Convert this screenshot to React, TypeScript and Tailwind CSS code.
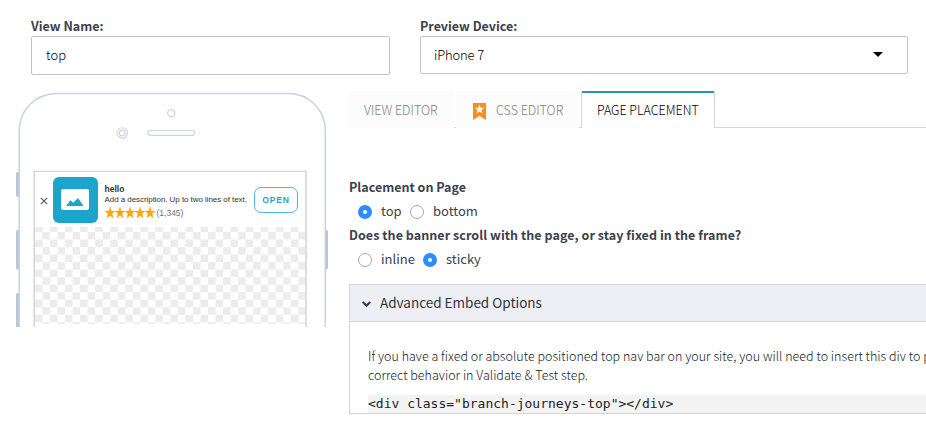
import React from "react";

const sans = "font-['Noto_Sans_CJK_SC',sans-serif]";

function Star() {
  return (
    <svg width="10" height="11" viewBox="0 0 10 10" preserveAspectRatio="none" className="block shrink-0">
      <path d="M5 0L6.3 3.6L10 3.7L7.1 6L8.1 10L5 7.7L1.9 10L2.9 6L0 3.7L3.7 3.6Z" fill="#ffa60d" stroke="#ffa60d" strokeWidth=".3" />
    </svg>
  );
}

function Radio({ checked = false }: { checked?: boolean }) {
  return checked ? (
    <span className="flex h-3.5 w-3.5 shrink-0 items-center justify-center rounded-full bg-[#2f8dfb]">
      <span className="h-1 w-1 rounded-full bg-white" />
    </span>
  ) : (
    <span className="h-3.5 w-3.5 shrink-0 rounded-full border border-[#a5a5a5] bg-white" />
  );
}

function PhoneFrame() {
  return (
    <svg width="316" height="235" viewBox="14 92 316 235" fill="none" className="col-start-1 row-start-1 block">
      <g fill="#b9c6d5">
        <path d="M19 172h-1.500q-1.500 0-1.500 2v21q0 2 1.500 2h1.500z" />
        <path d="M19 230h-1.500q-1.500 0-1.500 2v35.500q0 2 1.500 2h1.500z" />
        <path d="M19 293h-1.500q-1.500 0-1.500 2v33h3z" />
        <path d="M325.500 230h1q1.500 0 1.500 2v35.500q0 2-1.500 2h-1z" />
      </g>
      <path d="M19.300 328V130.500C19.300 110 36 93.500 56.500 93.500H288.500C309 93.500 325.300 110 325.300 130.500V328" fill="white" stroke="#c9d3e0" strokeWidth="1.500" />
      <circle cx="171.300" cy="113.200" r="3.600" stroke="#ccd5e1" strokeWidth="1.200" />
      <circle cx="122.300" cy="133" r="5.300" stroke="#ced4df" strokeWidth="1.100" />
      <circle cx="122.300" cy="133" r="2.900" stroke="#ced4df" strokeWidth="1.100" />
      <rect x="147.700" y="130.500" width="47" height="4.800" rx="2.400" stroke="#ccd5e1" strokeWidth="1.200" />
      <path d="M34.300 328V171.500H306V328" stroke="#ced5de" strokeWidth="1.500" />
    </svg>
  );
}

function Banner() {
  return (
    <div className="flex h-[55px] bg-white font-['Liberation_Sans',sans-serif]">
      <svg width="8" height="8" viewBox="0 0 8 8" className="mt-[25px] ml-[5px] block shrink-0">
        <path d="M.8.800L7.200 7.200M7.200.800L.8 7.200" stroke="#555" strokeWidth="1.100" />
      </svg>
      <div className="mt-[5px] mr-[0.500px] ml-[4.500px] flex h-[45.500px] w-[45px] shrink-0 items-center justify-center rounded-[6px] bg-[#1ca5ca]">
        <svg width="28" height="21" viewBox="0 0 28 21">
          <rect width="28" height="21" rx="2" fill="white" />
          <path d="M5 17L9.500 11.300L12.300 13.800L17 9L22.500 17Z" fill="#1ca5ca" />
        </svg>
      </div>
      <div className="ml-[6.500px] w-[149.500px] shrink-0 pt-3 whitespace-nowrap">
        <p className="text-[8.500px] leading-[10px] font-bold text-[#333]">hello</p>
        <p className="text-[8px] leading-[11px] tracking-[-0.060px] text-[#333]">Add a description. Up to two lines of text.</p>
        <div className="flex h-[15px] items-center">
          <Star /><Star /><Star /><Star /><Star />
          <span className="ml-[2px] pt-px text-[8.500px] text-[#777]">(1,345)</span>
        </div>
      </div>
      <div className="mt-[15px] flex h-[26px] w-[44px] shrink-0 items-center justify-center rounded-[7px] border border-[#4db8d5] text-[8.500px] font-bold tracking-[0.900px] text-[#1ca5ca]">
        OPEN
      </div>
    </div>
  );
}

export default function App() {
  return (
    <div className={`h-[440px] w-[926px] overflow-hidden bg-white text-[#3c414d] ${sans}`}>
      <div className="flex h-[91px] gap-[30px] pt-[16px] pl-[31px] whitespace-nowrap">
        <div className="w-[359px]">
          <label className="block h-[20px] text-[12.500px] leading-[19px] font-bold">View Name:</label>
          <div className="flex h-[39px] items-center rounded-[2px] border border-[#c4c4c4] pb-[2px] pl-[14px] text-[13px] font-light text-black">top</div>
        </div>
        <div className="w-[488px]">
          <label className="block h-[20px] text-[12.500px] leading-[19px] font-bold">Preview Device:</label>
          <div className="flex h-[38px] items-center justify-between rounded-[2px] border border-[#c4c4c4] pr-6 pl-[13px] text-[13px] font-light text-black">
            <span className="tracking-[-0.150px]">iPhone 7</span>
            <svg width="10" height="5" viewBox="0 0 10 5" className="mb-px"><path d="M0 0H10L5 5Z" fill="black" /></svg>
          </div>
        </div>
      </div>
      <div className="flex">
        <div className="grid w-[335px] shrink-0 content-start pt-px pl-[14px]">
          <PhoneFrame />
          <div className="z-10 col-start-1 row-start-1 mt-[80px] ml-[21px] w-[270px]">
            <Banner />
            <div className="h-[97px] bg-[conic-gradient(#ececec_25%,#fff_0_50%,#ececec_0_75%,#fff_0)] bg-[length:15.060px_15.060px] bg-[position:0_5px]" />
          </div>
        </div>
        <main className="ml-[14px] w-[577px] shrink-0 whitespace-nowrap">
          <nav className="flex h-[37px] text-[12.500px] font-light">
            <div className="flex w-[105px] items-center bg-[#fcfcfc] pt-[2px] pl-[15px] text-[#808080]">VIEW EDITOR</div>
            <div className="w-[2px] border-b border-[#d3d5d8]" />
            <div className="flex w-[123px] items-center bg-[#fcfcfc] pt-[2px] pl-[17px] text-[#808080]">
              <svg width="13" height="17" viewBox="0 0 13 18" preserveAspectRatio="none" className="mt-px mr-[10px] shrink-0">
                <path d="M0 0H13V18L6.500 13.500L0 18Z" fill="#f58e1d" />
                <path d="M6.500 1.500L7.700 5L11.300 5.100L8.500 7.300L9.500 11L6.500 8.900L3.500 11L4.500 7.300L1.700 5.100L5.300 5Z" fill="white" />
              </svg>
              CSS EDITOR
            </div>
            <div className="w-[2px] border-b border-[#d3d5d8]" />
            <div className="flex w-[134px] items-center rounded-t-[2px] border-x border-t-2 border-x-[#d3d5d8] border-t-[#2496b2] pl-[15px] tracking-[-0.030px] text-black">PAGE PLACEMENT</div>
            <div className="flex-1 border-b border-[#d3d5d8]" />
          </nav>
          <section className="pt-[47px] text-[13px]">
            <h3 className="h-[25px] text-[12.500px] leading-6 font-bold">Placement on Page</h3>
            <div className="flex h-[23px] items-center pl-[9px] leading-[22px]">
              <Radio checked /><span className="ml-[9px] w-[29px] pb-px">top</span>
              <Radio /><span className="ml-[9px] pb-px">bottom</span>
            </div>
            <h3 className="h-[25px] text-[12.500px] leading-6 font-bold tracking-[0.052px]">Does the banner scroll with the page, or stay fixed in the frame?</h3>
            <div className="flex h-[23px] items-center pl-[9px] leading-[22px]">
              <Radio /><span className="ml-[9px] w-[42px] pb-px">inline</span>
              <Radio checked /><span className="ml-[9px] pb-px">sticky</span>
            </div>
          </section>
          <section className="mt-[13px] h-[130px] overflow-hidden border-y border-l border-[#d3d5d8]">
            <header className="flex h-[37px] items-center border-b border-[#d3d5d8] bg-[#eeeff4] pl-3 text-[13.500px] font-normal text-[#2e333e]">
              <svg width="9" height="7" viewBox="0 0 9 7" className="mt-[2px] mr-[9px]"><path d="M.7 1L4.500 4.800L8.300 1" stroke="#3c414d" strokeWidth="2.200" fill="none" /></svg>
              <span className="pb-px">Advanced Embed Options</span>
            </header>
            <div className="pt-[24px] pl-[18px]">
              <p className="h-[19px] text-[12.500px] leading-[19px] font-light tracking-[0.012px] text-[#181c28]">If you have a fixed or absolute positioned top nav bar on your site, you will need to insert this div to p</p>
              <p className="h-[19px] text-[12.500px] leading-[19px] font-light tracking-[0.012px] text-[#181c28]">correct behavior in Validate &amp; Test step.</p>
              <pre className="mt-[11px] h-[18px] bg-[#f3f3f3] font-['DejaVu_Sans_Mono',monospace] text-[13px] leading-[18px] text-[#222]">{'<div class="branch-journeys-top"></div>'}</pre>
            </div>
          </section>
        </main>
      </div>
    </div>
  );
}
